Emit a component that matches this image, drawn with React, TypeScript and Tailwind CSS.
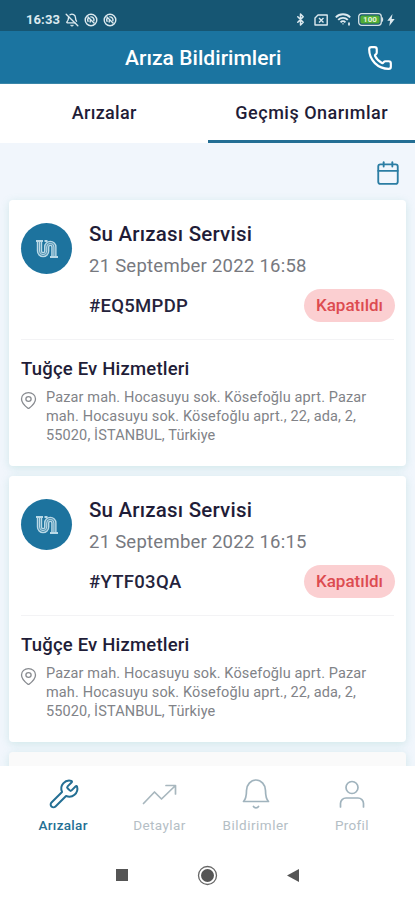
import React from 'react';
import { BellOff, Bluetooth, Calendar, MapPin, Phone, Wrench } from 'lucide-react';

interface Repair {
  code: string;
  date: string;
}

const repairs: Repair[] = [
  { code: '#EQ5MPDP', date: '21 September 2022 16:58' },
  { code: '#YTF03QA', date: '21 September 2022 16:15' },
];

const address = [
  'Pazar mah. Hocasuyu sok. Kösefoğlu aprt. Pazar',
  'mah. Hocasuyu sok. Kösefoğlu aprt., 22, ada, 2,',
  '55020, İSTANBUL, Türkiye',
];

function MutedCircle() {
  return (
    <svg className="h-[14px] w-[14px]" viewBox="0 0 14 14" fill="none" stroke="currentColor">
      <circle cx="7" cy="7" r="5.8" strokeWidth="1.4" />
      <path d="M4.3 8.8a3.2 3.2 0 0 1 .3-4M6.3 3.9a3.2 3.2 0 0 1 3.5 4.3" strokeWidth="1.4" />
      <path d="M3.5 3.5l7 7M6 9.5L6.5 7" strokeWidth="1.4" />
    </svg>
  );
}

function StatusBar() {
  return (
    <div className="flex h-[31px] shrink-0 items-center bg-[#165673] pt-[8px] pr-[20px] pl-[26px] text-[#dce9ef]">
      <span className="w-[39px] text-[13px] leading-none font-bold tracking-[0.1px]">16:33</span>
      <BellOff className="h-[14px] w-[14px]" strokeWidth={2.3} />
      <span className="ml-[5px]"><MutedCircle /></span>
      <span className="ml-[5px]"><MutedCircle /></span>
      <Bluetooth className="ml-auto h-[15px] w-[13px]" strokeWidth={2.8} />
      <svg className="ml-[7px] h-[12px] w-[15px]" viewBox="0 0 15 12" fill="none" stroke="currentColor" strokeWidth="1.4">
        <path d="M4 1h9.2v10H1V4z" strokeLinejoin="round" />
        <path d="M5 4l4.5 4.5M9.5 4L5 8.5" />
      </svg>
      <svg className="ml-[6px] h-[13px] w-[17px]" viewBox="0 0 17 13" fill="none" stroke="currentColor" strokeWidth="1.9">
        <path d="M.8 4.3a10.2 10.2 0 0 1 14.4 0M3.2 6.9a6.8 6.8 0 0 1 9.6 0M5.6 9.3a3.4 3.4 0 0 1 4.8 0" />
        <path d="M6.8 10.5h2.4L8 11.8z" fill="currentColor" stroke="none" />
        <path d="M14 9.5v3" strokeWidth="1.8" />
      </svg>
      <svg className="ml-[6px] h-[13px] w-[26px]" viewBox="0 0 26 13">
        <rect x=".7" y=".7" width="22.6" height="11.6" rx="3" fill="none" stroke="#d5e2e6" strokeWidth="1.3" />
        <rect x="2.4" y="2.4" width="19.2" height="8.2" rx="1.5" fill="#50ad36" />
        <path d="M24 4c1.6.5 1.6 4.5 0 5z" fill="#d5e2e6" />
        <text x="12" y="9.4" textAnchor="middle" fontSize="8" fontWeight="700" fill="#e3f3d9">100</text>
      </svg>
      <svg className="ml-[3px] h-[12px] w-[8px]" viewBox="0 0 8 12" fill="currentColor">
        <path d="M5.5 0L.3 6.7h2.8L2.3 12 7.7 5H4.6z" />
      </svg>
    </div>
  );
}

function Header() {
  return (
    <header className="flex h-[53px] shrink-0 items-center border-b border-[#3a86a8] bg-[#1b74a0] pt-[2px] pr-[22px] pl-[125px] text-white">
      <h1 className="text-[21px] leading-none font-medium tracking-[0.05px] whitespace-nowrap">Arıza Bildirimleri</h1>
      <Phone className="ml-auto h-[26px] w-[26px]" strokeWidth={2} />
    </header>
  );
}

function Tabs() {
  return (
    <div className="grid h-[59px] shrink-0 grid-cols-2 bg-white text-[18px] text-[#1f1d38]">
      <button className="pb-[3px] pl-px font-medium tracking-[0.3px]">Arızalar</button>
      <button className="border-b-[3px] border-[#236e94] pl-px font-medium tracking-[0.5px]">Geçmiş Onarımlar</button>
    </div>
  );
}

function RepairCard({ code, date }: Repair) {
  return (
    <article className="h-[266px] shrink-0 rounded-[4px] bg-white px-3 shadow-[0_2px_9px_rgba(90,180,170,0.22)]">
      <div className="flex h-[140px] border-b border-[#f3f3f5]">
        <div className="mt-[23px] flex h-[51px] w-[51px] shrink-0 items-center justify-center rounded-full bg-[#1d739e]">
          {/* Water pipe logo */}
          <svg className="h-[20px] w-[22px]" viewBox="0 0 22 20" fill="none">
            <path d="M3.5 1.5v10.5a3.6 3.6 0 0 0 7.2 0v-4a3.6 3.6 0 0 1 7.2 0V18" stroke="#b9d9e7" strokeWidth="5.4" />
            <path d="M3.5 3v9a3.6 3.6 0 0 0 7.2 0v-4a3.6 3.6 0 0 1 7.2 0V17" stroke="#4a8dae" strokeWidth="2.6" />
            <path d="M3.5 3v9a3.6 3.6 0 0 0 7.2 0v-4a3.6 3.6 0 0 1 7.2 0V17" stroke="#b9d9e7" strokeWidth="1" />
            <path d="M0 2h7M14 18h8M8.5 2h3" stroke="#b9d9e7" strokeWidth="1.8" />
          </svg>
        </div>
        <div className="ml-[17px] flex-1 pt-[22px] whitespace-nowrap">
          <h2 className="text-[20.5px] leading-6 font-medium tracking-[0.2px] text-[#1f1d38]">Su Arızası Servisi</h2>
          <p className="mt-[8px] text-[18.5px] leading-6 tracking-[0.25px] text-[#77797f]">{date}</p>
          <div className="-mr-px mt-[11px] flex h-[33px] items-center justify-between">
            <span className="pt-[2px] text-[18.5px] font-medium tracking-[0.3px] text-[#25233c]">{code}</span>
            <span className="flex h-[33px] w-[91px] items-center justify-center rounded-full bg-[#fbcfd1] pt-px text-[17px] font-medium text-[#dd4b50]">Kapatıldı</span>
          </div>
        </div>
      </div>
      <h3 className="mt-[17px] text-[18.5px] leading-6 font-medium tracking-[0.2px] text-[#1f1d38]">Tuğçe Ev Hizmetleri</h3>
      <div className="mt-[7px] flex">
        <MapPin className="mt-[3px] -ml-[3px] h-[19px] w-[21px] text-[#888b90]" strokeWidth={1.5} preserveAspectRatio="none" />
        <p className="ml-[7px] text-[14.5px] leading-[19px] tracking-[0.13px] whitespace-nowrap text-[#818388]">
          {address.map((line) => (
            <span key={line} className="block">{line}</span>
          ))}
        </p>
      </div>
    </article>
  );
}

function BottomNav() {
  return (
    <nav className="flex h-[82px] shrink-0 bg-white px-[15px] pt-[12px] text-[13.5px] tracking-[0.3px] text-[#b4bec5]">
      <div className="flex flex-1 flex-col items-center text-[#246f94]">
        <Wrench className="ml-[2px] h-[32px] w-[32px]" strokeWidth={1.5} />
        <span className="mt-[5px] font-medium">Arızalar</span>
      </div>
      <div className="flex flex-1 flex-col items-center">
        <svg className="h-[32px] w-[36px]" viewBox="0 0 36 32" fill="none" stroke="#a8b7be" strokeWidth="1.7" strokeLinecap="round" strokeLinejoin="round">
          <path d="M2.5 25.5l11-11.5 7 7L34 8M25 7.5h9.5V16" />
        </svg>
        <span className="mt-[5px] tracking-[0.4px]">Detaylar</span>
      </div>
      <div className="flex flex-1 flex-col items-center">
        <svg className="h-[32px] w-[32px]" viewBox="0 0 32 32" fill="none" stroke="#a0b3bd" strokeWidth="1.7" strokeLinecap="round" strokeLinejoin="round">
          <path d="M3.5 23.5h25c-2.5-2.5-3-5.5-3-11a9.5 10.5 0 0 0-19 0c0 5.5-.5 8.5-3 11zM13.5 28.5c1 1.7 4 1.7 5 0" />
        </svg>
        <span className="mt-[5px] tracking-[0.5px]">Bildirimler</span>
      </div>
      <div className="flex flex-1 flex-col items-center">
        <svg className="h-[32px] w-[32px]" viewBox="0 0 32 32" fill="none" stroke="#a0b3bd" strokeWidth="1.7" strokeLinecap="round">
          <circle cx="16" cy="9.5" r="6" />
          <path d="M4.5 29v-3.5a5.5 5.5 0 0 1 5.5-5.5h12a5.5 5.5 0 0 1 5.5 5.5V29" />
        </svg>
        <span className="mt-[5px]">Profil</span>
      </div>
    </nav>
  );
}

function SystemNav() {
  return (
    <div className="flex h-[52px] shrink-0 items-center justify-center bg-white">
      <svg className="h-[24px] w-[186px]" viewBox="0 0 186 24">
        <rect x="1" y="7" width="12" height="12" fill="#555" />
        <circle cx="92.5" cy="13.5" r="9" fill="none" stroke="#666" strokeWidth="1.3" />
        <circle cx="92.5" cy="13.5" r="6.5" fill="#555" />
        <path d="M172 13.5l12-6.5v13z" fill="#555" />
      </svg>
    </div>
  );
}

export default function App() {
  return (
    <div className="flex h-[900px] w-[415px] flex-col overflow-hidden bg-white font-[Roboto,sans-serif]">
      <StatusBar />
      <Header />
      <Tabs />
      <main className="flex h-[623px] shrink-0 flex-col overflow-hidden bg-[#f1f6fc] px-[9px]">
        <div className="flex h-[57px] shrink-0 items-center justify-end pt-[2px] pr-[5px]">
          <Calendar className="h-[26px] w-[26px] text-[#2b7da3]" strokeWidth={1.7} />
        </div>
        <div className="flex flex-col gap-[10px]">
          {repairs.map((repair) => (
            <RepairCard key={repair.code} {...repair} />
          ))}
          <div className="h-[40px] shrink-0 rounded-[4px] bg-[#fafafa] shadow-[0_2px_9px_rgba(90,180,170,0.22)]" />
        </div>
      </main>
      <BottomNav />
      <SystemNav />
    </div>
  );
}
